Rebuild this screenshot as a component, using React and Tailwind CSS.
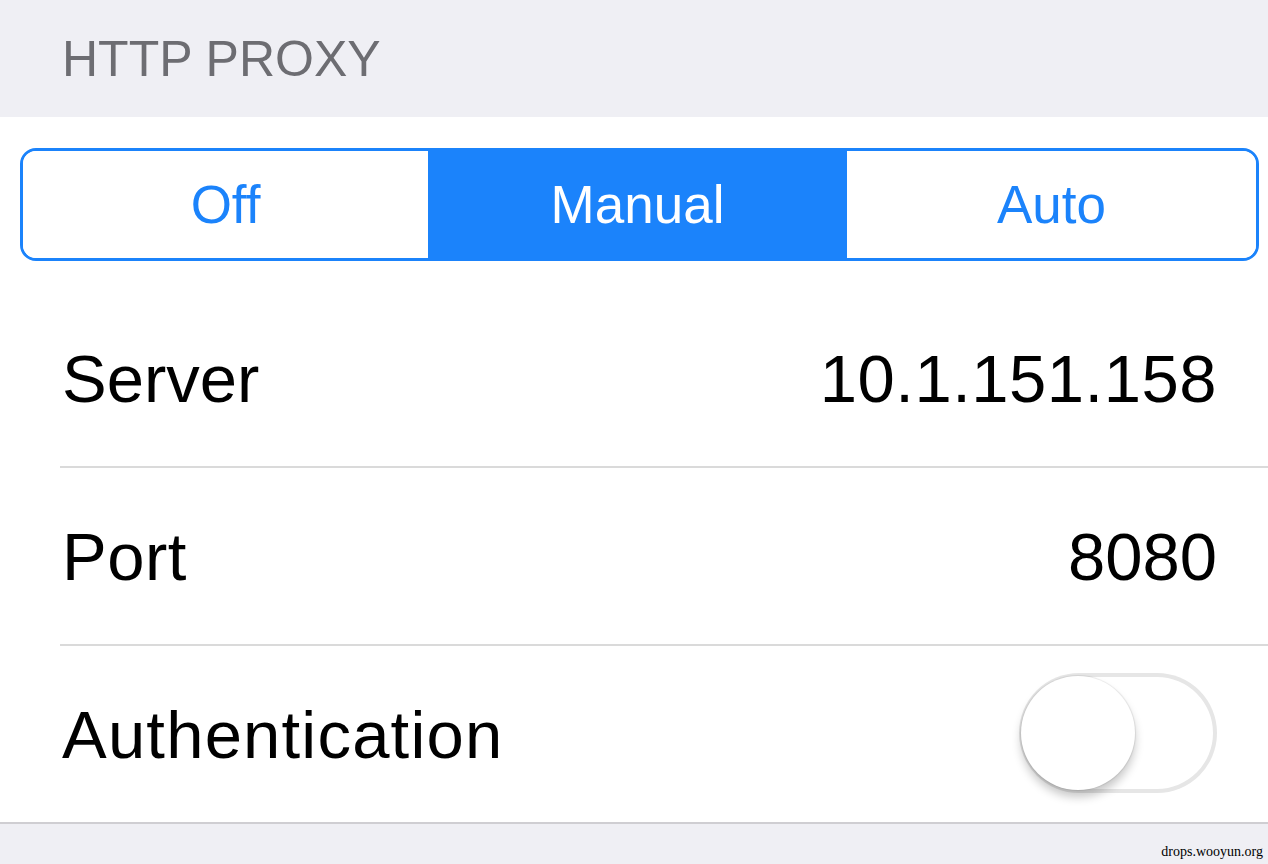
import React, { useState } from 'react';

const Row = ({ label, labelClass = '', children, last }) => (
  <div className="flex flex-col pl-[60px]">
    <div className="flex items-center justify-between h-[176px] pr-[51px]">
      <span className={`text-[67px] leading-none text-black pl-[2px] ${labelClass}`}>{label}</span>
      {children}
    </div>
    {!last && <div className="h-[2px] bg-[#dadada]" />}
  </div>
);

const App = () => {
  const [mode, setMode] = useState('Manual');
  const [auth, setAuth] = useState(false);

  return (
    <div
      className="h-[864px] overflow-hidden bg-[#efeff4] flex flex-col"
      style={{ fontFamily: '"Liberation Sans", Arial, sans-serif' }}
    >
      {/* section header */}
      <div className="h-[117px] flex items-center px-[62px]">
        <span className="text-[50px] leading-none text-[#6d6d72]">HTTP PROXY</span>
      </div>

      {/* card */}
      <div className="bg-white flex flex-col">
        <div className="pt-[31px] pl-[20px] pr-[9px] pb-[29px]">
          <div className="grid grid-cols-[405fr_419fr_409fr] h-[113px] border-[3px] border-[#1b83fb] rounded-[16px] overflow-hidden">
            {['Off', 'Manual', 'Auto'].map((m) => (
              <button
                key={m}
                onClick={() => setMode(m)}
                className={`flex items-center justify-center text-[53px] leading-none ${
                  mode === m ? 'bg-[#1b83fb] text-white' : 'bg-white text-[#1b83fb]'
                }`}
              >
                {m}
              </button>
            ))}
          </div>
        </div>

        <Row label="Server">
          <span className="text-[67px] leading-none text-black tracking-[0.5px]">10.1.151.158</span>
        </Row>
        <Row label="Port" labelClass="tracking-[0.5px]">
          <span className="text-[67px] leading-none text-black">8080</span>
        </Row>
        <Row label="Authentication" labelClass="tracking-[1.2px]" last>
          <button
            onClick={() => setAuth(!auth)}
            className={`w-[198px] h-[120px] rounded-full flex items-center px-[2px] mt-[-3px] ${
              auth
                ? 'bg-[#4cd964] justify-end'
                : 'bg-white shadow-[inset_0_0_0_4px_#e6e6e6] justify-start'
            }`}
          >
            <span className="block w-[114px] h-[114px] rounded-full bg-white shadow-[0_7px_10px_rgba(0,0,0,0.22),0_0_1px_1px_rgba(0,0,0,0.08)]" />
          </button>
        </Row>
      </div>

      {/* bottom band */}
      <div className="h-[2px] bg-[#cfced2]" />
      <div className="flex-1 flex items-end justify-end pr-[5px] pb-[5px]">
        <span
          className="text-[14px] leading-none text-black"
          style={{ fontFamily: '"Liberation Serif", "Times New Roman", serif' }}
        >
          drops.wooyun.org
        </span>
      </div>
    </div>
  );
};

export default App;
